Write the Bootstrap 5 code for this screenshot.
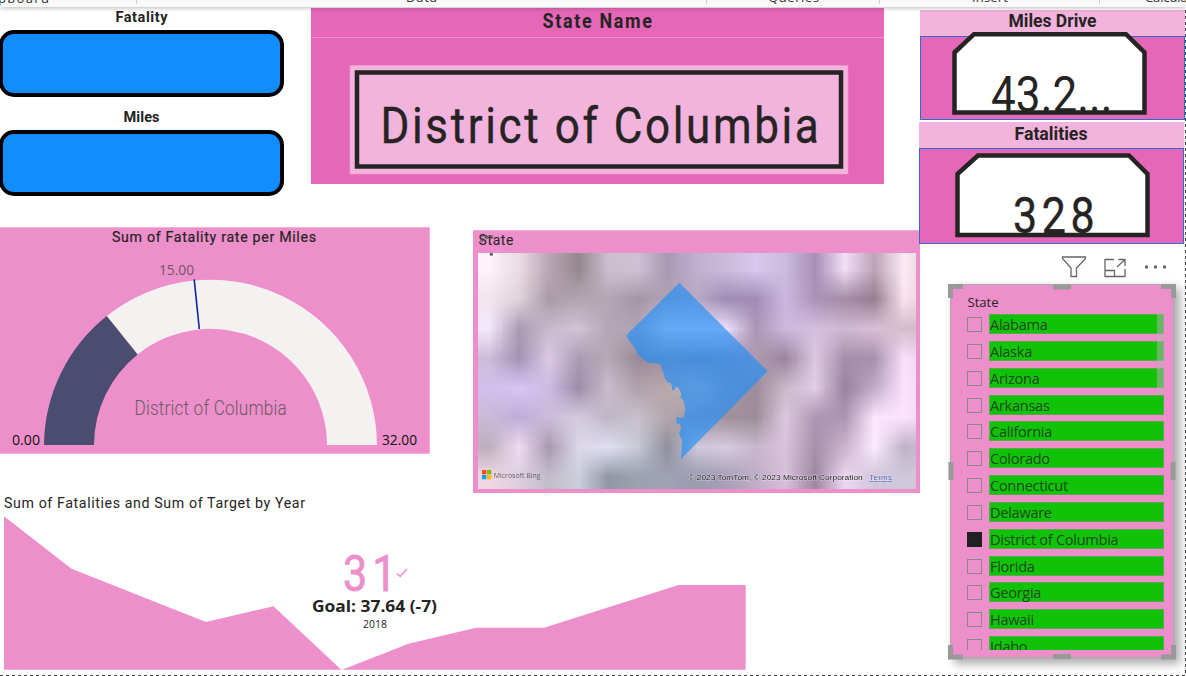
<!DOCTYPE html>
<html lang="en">
<head>
<meta charset="utf-8">
<title>Fatality report</title>
<link href="https://cdn.jsdelivr.net/npm/bootstrap@5.3.0/dist/css/bootstrap.min.css" rel="stylesheet">
<style>
:root{--pink:#ed8fca;--deep:#e667b8;--pale:#f2b3dc;--ink:#252423}
body{width:1186px;height:676px;overflow:hidden;background:#fff;color:var(--ink);font-family:Roboto,"Liberation Sans",sans-serif}
svg{display:block}
svg text{white-space:pre}
.ribbon{height:7px;background:#f9f9f9;box-shadow:0 1px 5px rgba(0,0,0,.28);z-index:5}
.report{height:669px}
.report::after{content:"";position:absolute;right:0;top:3px;bottom:0;width:1px;background:repeating-linear-gradient(#444 0 3px,transparent 3px 6px)}
.report::before{content:"";position:absolute;left:0;right:0;bottom:0;height:1px;background:repeating-linear-gradient(90deg,#444 0 3px,transparent 3px 6px)}
.main-col{width:920px}
.side-col{width:267px;margin-left:-1px}
.pick{height:67px;border:4px solid #000;border-radius:15px;background:#118dff;width:285px;margin-left:-1px}
.state-card{width:573px;height:176px;margin:1px 0 0 27px;background:var(--deep)}
.state-card header{height:30px;border-bottom:1px solid #f08fcc}
.gauge-card{width:430px;height:227px;background:var(--pink);border:1px solid #f3b0da;border-left:0}
.map-card{width:447px;height:263px;margin:3px 0 0 43px;background:var(--pink);border-top:1px solid #f3b0da;padding:22px 4px 0 5px}
.kpi-card{margin-top:-3px;height:182px}
.metric header{height:26px;background:var(--pale)}
.metric .face{background:var(--deep);border:1px solid #2a6fc9}
.metric svg{position:absolute;left:0;top:0}
.slicer{width:224px;height:374px;margin-left:31px;background:var(--pink);border:1px solid #aaa;box-shadow:5px 5px 9px 1px rgba(0,0,0,.33);padding:29px 9px 0 16px}
.slicer-list{height:336px;overflow:hidden}
.slicer-row{height:26.85px;gap:7px}
.tick{width:15px;height:15px;border:1px solid #888;flex:none}
.tick.on{background:#212121;border-color:#212121}
.state-name{height:20px;width:177px;background:#10c208;border:1px solid #59ab48;font:14.6px/19px "Open Sans","Noto Sans",sans-serif;letter-spacing:-.3px;color:#252423cc}
.thumb{right:9px;top:27px;width:7px;height:82px;background:rgba(190,175,185,.5)}
.handles{left:-3px;top:-1px}
</style>
</head>
<body>
<div class="ribbon position-relative overflow-visible">
  <svg width="1186" height="7" font-family="Open Sans" font-size="13" fill="#333">
    <text x="-2" y="2.500" textLength="51">pboard</text><text x="406" y="2" textLength="31">Data</text>
    <text x="768" y="2" textLength="51">Queries</text><text x="972" y="2" textLength="36">Insert</text><text x="1145" y="2" textLength="72">Calculations</text>
    <path d="M136.500 0v4M706.500 0v4M879.500 0v4M1099.500 0v4" stroke="#ccc"/>
  </svg>
</div>
<div class="report position-relative d-flex">
  <div class="main-col d-flex flex-column">
    <div class="d-flex" style="height:220px">
      <section>
        <svg width="284" height="23" font-size="14.500" font-weight="700" fill="#252423"><text x="115.500" y="15" textLength="52">Fatality</text></svg>
        <div class="pick"></div>
        <svg width="284" height="33" font-size="14.500" font-weight="700" fill="#252423"><text x="123.500" y="25" textLength="36">Miles</text></svg>
        <div class="pick" style="height:66px"></div>
      </section>
      <section class="state-card">
        <header><svg width="573" height="29" font-size="19.500" font-weight="700" fill="#252423"><text transform="translate(231.500 20) scale(.92 1)" textLength="119">State Name</text></svg></header>
        <svg width="573" height="146" viewBox="0 1 573 146" fill="#252423">
          <rect x="39" y="28.500" width="498" height="108.500" fill="#f2b3dc" stroke="#f09bd0" stroke-width=".6"/>
          <rect x="46" y="35.500" width="484" height="94" fill="none" stroke="#252423" stroke-width="4.500"/>
          <text transform="translate(69.500 106) scale(.88 1)" font-size="50" textLength="498" stroke="#252423" stroke-width=".4">District of Columbia</text>
        </svg>
      </section>
    </div>
    <div class="d-flex">
      <section class="gauge-card">
        <svg width="430" height="225" viewBox="0 228 430 225">
          <text x="112" y="242" font-size="14.200" fill="#252423" stroke="#252423" stroke-width=".2" textLength="204">Sum of Fatality rate per Miles</text>
          <path d="M106.700 316A166.500 166.500 0 0 1 377 445H327A116.500 116.500 0 0 0 137.600 354.500Z" fill="#f3f2f1"/>
          <path d="M44 445A166.500 166.500 0 0 1 106.700 316L137.600 354.500A116.500 116.500 0 0 0 94 445Z" fill="#4a4c70"/>
          <path d="M194.200 279.300L199.300 329" stroke="#12239e" stroke-width="1.600"/>
          <g font-family="Open Sans" font-size="14.500">
            <text x="159" y="275" fill="#6b5a66" textLength="35" lengthAdjust="spacingAndGlyphs">15.00</text>
            <text x="12" y="445" fill="#111" textLength="28" lengthAdjust="spacingAndGlyphs">0.00</text>
            <text x="382" y="445" fill="#111" textLength="35" lengthAdjust="spacingAndGlyphs">32.00</text>
          </g>
          <text transform="translate(134.500 415) scale(.88 1)" font-size="19.500" font-weight="300" fill="#6b5a66" textLength="173">District of Columbia</text>
        </svg>
      </section>
      <section class="map-card position-relative">
        <svg class="position-absolute start-0 top-0" width="447" height="28"><text x="5.500" y="14" font-size="14" fill="#252423" textLength="35">State</text><g fill="#555" opacity=".75"><circle cx="9" cy="9" r="1.900"/><circle cx="13.500" cy="6" r="1.900"/><circle cx="18.500" cy="6" r="1.900"/><circle cx="10" cy="5" r="1"/></g></svg>
        <div class="position-relative">
          <canvas id="terrain" class="d-block" width="438" height="236"></canvas>
          <svg class="position-absolute start-0 top-0" width="438" height="236" viewBox="39 84 1314 708">
            <circle cx="79" cy="88" r="5" fill="#666"/>
            <path d="M643 173L908 439L648 702L650 665L652 644L647 640L642 622L646 615L648 605L643 595L636 598L633 577L654 578L659 566L661 550L657 533L650 519L640 518L648 515L648 503L641 490L631 484L630 495L621 495L621 484L617 475L607 472L601 462L596 448L591 432L586 418L572 415L551 413L535 404L517 387L508 366L492 347L484 331Z" fill="#1e8ff8" fill-opacity=".66"/>
            <path d="M51 735h13v13H51z" fill="#f25022"/><path d="M66 735h13v13H66z" fill="#7fba00"/><path d="M51 750h13v13H51z" fill="#00a4ef"/><path d="M66 750h13v13H66z" fill="#ffb900"/>
            <text x="86" y="758" font-family="Open Sans" font-size="22" fill="#666" textLength="141" lengthAdjust="spacingAndGlyphs">Microsoft Bing</text>
            <g font-family="Liberation Sans" font-size="24" style="paint-order:stroke" stroke="#fff" stroke-opacity=".5" stroke-width="3">
              <text x="670" y="766" fill="#222" textLength="523" lengthAdjust="spacingAndGlyphs">© 2023 TomTom, © 2023 Microsoft Corporation</text>
              <text x="1213" y="766" fill="#4a5fae" textLength="68" text-decoration="underline">Terms</text>
            </g>
          </svg>
        </div>
      </section>
    </div>
    <section class="kpi-card">
      <svg width="920" height="182" viewBox="0 490 920 182">
        <path d="M4 516.300L71.500 568.700L206 622L273.500 606.300L341.500 670L408.500 643.700L476 627.700H544L678.500 585H745.700V669.700H4Z" fill="#ed8fca"/>
        <text x="4" y="508" font-size="14.200" fill="#252423" textLength="301">Sum of Fatalities and Sum of Target by Year</text>
        <text transform="translate(343 591) scale(.86 1)" font-size="50" fill="#ed8fca" stroke="#ed8fca" stroke-width=".8" textLength="62">31</text>
        <path d="M397 573.500L400.200 576.500L407 569" fill="none" stroke="#ed8fca" stroke-width="1.500"/>
        <g font-family="Open Sans" fill="#252423"><text x="312" y="612" font-size="16" font-weight="700" textLength="125" lengthAdjust="spacingAndGlyphs">Goal: 37.64 (-7)</text>
        <text x="363" y="628" font-size="10.500" textLength="24" lengthAdjust="spacingAndGlyphs">2018</text></g>
      </svg>
    </section>
  </div>
  <div class="side-col">
    <section class="metric position-relative" style="margin:3px 0 0 1px;width:265px;height:110px">
      <header></header><div class="face" style="height:84px"></div>
      <svg width="265" height="110" viewBox="920 10 265 110" fill="#252423">
        <path d="M954.500 52.500L974 34.200H1126L1144.500 52.500V112.500H954.500Z" fill="#fff" stroke="#252423" stroke-width="4.500"/>
        <clipPath id="c1"><path d="M0 -80H160V-1H0z"/></clipPath>
        <text x="1008.500" y="27" font-size="17.500" font-weight="700" textLength="88" lengthAdjust="spacingAndGlyphs">Miles Drive</text>
        <text clip-path="url(#c1)" transform="translate(991 112) scale(.88 1)" font-size="50" textLength="138">43.2...</text>
      </svg>
    </section>
    <section class="metric position-relative" style="margin-top:2px;width:265px;height:122px">
      <header></header><div class="face" style="height:96px"></div>
      <svg width="265" height="122" viewBox="919 122 265 122" fill="#252423">
        <path d="M957.500 174L978 155.500H1129L1147.500 174V235H957.500Z" fill="#fff" stroke="#252423" stroke-width="4.500"/>
        <text x="1014.500" y="139.500" font-size="17.500" font-weight="700" textLength="73" lengthAdjust="spacingAndGlyphs">Fatalities</text>
        <text transform="translate(1013 233) scale(.86 1)" font-size="50" textLength="95" stroke="#252423" stroke-width=".4">328</text>
      </svg>
    </section>
    <svg width="266" height="40" viewBox="919 244 266 40" fill="none" stroke="#666" stroke-width="1.300">
      <path d="M1062.500 257H1085.500V258.500L1076.500 268V276.500H1071V268L1062.500 258.500Z"/>
      <path d="M1114 259.500H1105V276.500H1125V269M1105 270.500H1114.500V276.500M1117 267L1125 259.500M1118.500 259.500H1125V266"/>
      <g fill="#666" stroke="none"><circle cx="1146.500" cy="267" r="1.700"/><circle cx="1155.500" cy="267" r="1.700"/><circle cx="1164.500" cy="267" r="1.700"/></g>
    </svg>
    <section class="slicer position-relative">
      <svg class="handles position-absolute" width="230" height="376" viewBox="948 284 230 376">
        <path d="M950.500 298V286.500H963M1161 286.500H1173.500V298M950.500 645V657H963M1161 657H1173.500V645M1053 287H1071M1053 656.500H1071M951 462V480M1173 462V480" fill="none" stroke="#999" stroke-width="5"/>
        <text x="967.500" y="307" font-family="Open Sans" font-size="12.500" fill="#252423" textLength="31" lengthAdjust="spacingAndGlyphs">State</text>
      </svg>
      <div class="slicer-list" id="states"></div>
      <div class="thumb position-absolute"></div>
    </section>
  </div>
</div>
<script src="https://cdn.jsdelivr.net/npm/bootstrap@5.3.0/dist/js/bootstrap.bundle.min.js"></script>
<script>
const names=["Alabama","Alaska","Arizona","Arkansas","California","Colorado","Connecticut","Delaware","District of Columbia","Florida","Georgia","Hawaii","Idaho"];
document.getElementById("states").innerHTML=names.map(n=>`<div class="slicer-row d-flex align-items-start"><span class="tick${n==="District of Columbia"?" on":""}" style="margin-top:3px"></span><span class="state-name">${n}</span></div>`).join("");

// Low-resolution terrain tile, one sample per 29.6px, interpolated when enlarged
const rows=[
"fdf3f8 eadbe4 b9a8b4 95878f cbbfce cfc2d4 a899b5 c0b0d2 cbbbdc d9c8ee cbbbdd a890b8 f2def9 bda3b5 fdeaf6 dcccc8",
"f1e6ee dfd2da ab9ca9 b3a6b0 b4a6b4 a596a7 b3a2b4 b9a9c4 a08cb4 a18db6 ccb8e0 ac92b8 a68ca8 977e90 fbe3ef e0c8d0",
"f3e8fa aa9bb2 c9bacb d2c3d6 b4a6b4 b3a4b3 ece0f2 e8dcf4 eedffc ab97b8 ccb9dd d4bfe0 d0b8d2 dbc0d6 d6bccb d4bcc8",
"cdbddb a392b4 dccae8 ac9cb2 b7a9b6 9a8a98 a090a0 9c8ca0 a090a8 b09ab0 9a859d dcc8e2 a68eac a78fae fbe0fa e8ccec",
"d0c0ea d8c6f5 cdbbe2 9c8dab cabdcc b0a2ac b8a9ac c4b6bc a898a8 9d8c9b cbb8c8 e0cee6 9a82a2 c4aacb fde3ff f0d4f4",
"cbbad9 bfacd8 cbbddb d6cbe0 bfb6c4 c8c1cd b2a6ab a898a4 a0919b 9d8f99 dcc9dd ac95b3 ae96b4 fbe6fd fce2fd e8d4ee",
"beb0be efdcf2 a999ae dcd7e8 dfe0f2 c8cad6 8f909d d0c8dc d6cbe0 c8b8cc d9c2dd a891ad ccb2cf fdecff bfb2c8 c8c0d0",
"f0d8e2 dccfe0 c3bccb ccd0dc 9298a6 9ba2b0 a0a2b6 9b9bb0 a8a0b8 c0aec8 d8bfdd a087a3 ebd8f2 d2c6da cfc9da d0ccdc"
].map(r=>r.split(" "));
const small=document.createElement("canvas");small.width=18;small.height=10;
const s=small.getContext("2d");
for(let y=0;y<10;y++)for(let x=0;x<18;x++){
  s.fillStyle="#"+rows[Math.min(7,Math.max(0,y-1))][Math.min(15,Math.max(0,x-1))];
  s.fillRect(x,y,1,1);
}
const g=document.getElementById("terrain").getContext("2d"),k=29.6;
g.imageSmoothingEnabled=true;g.imageSmoothingQuality="low";
g.drawImage(small,10.7-1.5*k,15.7-1.5*k,18*k,10*k);
</script>
</body>
</html>
